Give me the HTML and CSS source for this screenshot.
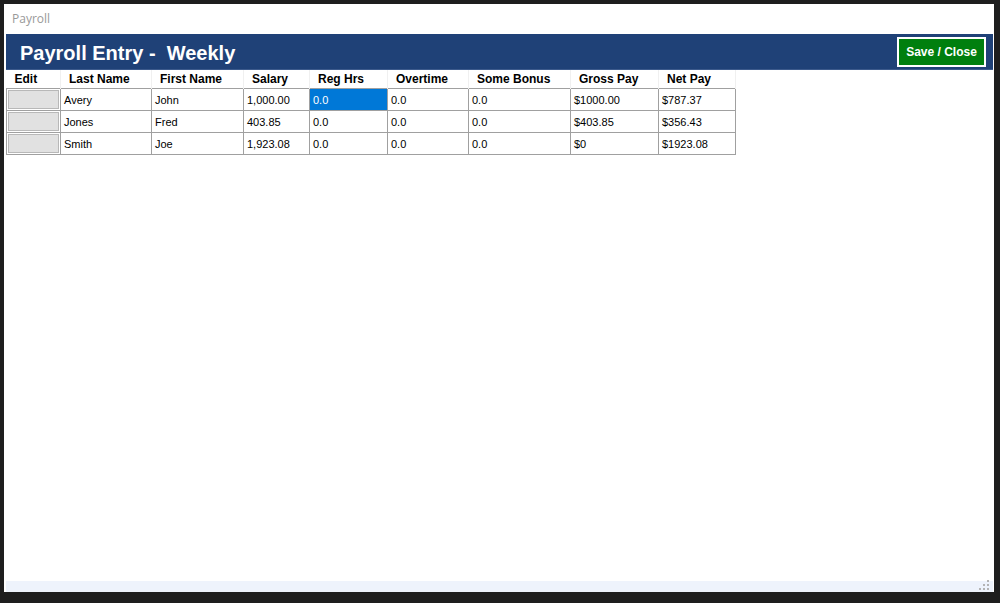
FILE: index.html
```html
<!DOCTYPE html>
<html>
<head>
<meta charset="utf-8">
<link rel="stylesheet" href="styles.css">
</head>
<body>
<div class="window">
  <div class="titlebar">Payroll</div>
  <div class="content">
    <div class="banner">
      <div class="banner-title">Payroll Entry -&nbsp; Weekly</div>
      <button class="save-btn">Save / Close</button>
    </div>
    <table class="grid">
      <colgroup>
        <col class="c-edit">
        <col class="c-last">
        <col class="c-first">
        <col class="c-sal">
        <col class="c-reg">
        <col class="c-ot">
        <col class="c-bon">
        <col class="c-gross">
        <col class="c-net">
      </colgroup>
      <thead>
        <tr>
          <th>Edit</th>
          <th>Last Name</th>
          <th>First Name</th>
          <th>Salary</th>
          <th>Reg Hrs</th>
          <th>Overtime</th>
          <th>Some Bonus</th>
          <th>Gross Pay</th>
          <th>Net Pay</th>
        </tr>
      </thead>
      <tbody>
        <tr>
          <td class="edit"><span class="edit-btn"></span></td>
          <td>Avery</td><td>John</td><td>1,000.00</td>
          <td class="selected">0.0</td><td>0.0</td><td>0.0</td>
          <td>$1000.00</td><td>$787.37</td>
        </tr>
        <tr>
          <td class="edit"><span class="edit-btn"></span></td>
          <td>Jones</td><td>Fred</td><td>403.85</td>
          <td>0.0</td><td>0.0</td><td>0.0</td>
          <td>$403.85</td><td>$356.43</td>
        </tr>
        <tr>
          <td class="edit"><span class="edit-btn"></span></td>
          <td>Smith</td><td>Joe</td><td>1,923.08</td>
          <td>0.0</td><td>0.0</td><td>0.0</td>
          <td>$0</td><td>$1923.08</td>
        </tr>
      </tbody>
    </table>
    <div class="spacer"></div>
    <div class="statusbar">
      <svg class="grip" width="12" height="12" viewBox="0 0 12 12">
        <rect x="8" y="0" width="2" height="2" fill="#b4b4b4"/>
        <rect x="4" y="4" width="2" height="2" fill="#b4b4b4"/>
        <rect x="8" y="4" width="2" height="2" fill="#b4b4b4"/>
        <rect x="0" y="8" width="2" height="2" fill="#b4b4b4"/>
        <rect x="4" y="8" width="2" height="2" fill="#b4b4b4"/>
        <rect x="8" y="8" width="2" height="2" fill="#b4b4b4"/>
      </svg>
    </div>
  </div>
</div>
</body>
</html>
```

FILE: styles.css
```css
html, body {
  margin: 0;
  padding: 0;
  background: #1e1e1e;
}
body {
  width: 1000px;
  height: 603px;
  overflow: hidden;
  padding: 4px;
  box-sizing: border-box;
}
.window {
  width: 990px;
  height: 588px;
  background: #ffffff;
  display: flex;
  flex-direction: column;
}
.titlebar {
  height: 30px;
  box-sizing: border-box;
  padding: 7px 0 0 8px;
  font-family: "Open Sans", "Noto Sans", sans-serif;
  font-size: 12px;
  color: #999999;
  line-height: 15px;
}
.content {
  flex: 1;
  display: flex;
  flex-direction: column;
  padding: 0 1px 0 2px;
}
.banner {
  height: 35px;
  background: #1f4177;
  border-bottom: 1px solid #3c5a8c;
  display: flex;
  align-items: center;
  justify-content: space-between;
  padding: 0 7px 0 14px;
}
.banner-title {
  font-family: "Liberation Sans", Arial, sans-serif;
  font-weight: bold;
  font-size: 20px;
  color: #ffffff;
  padding-top: 3px;
}
.save-btn {
  width: 89px;
  height: 30px;
  background: #007f0e;
  border: 2px solid #ffffff;
  color: #ffffff;
  font-family: "Liberation Sans", Arial, sans-serif;
  font-weight: bold;
  font-size: 12px;
  padding: 0;
  margin-top: 1px;
}
.grid {
  border-collapse: collapse;
  font-family: "Liberation Sans", Arial, sans-serif;
  font-size: 11px;
  color: #000000;
  table-layout: fixed;
  width: 729px;
}
.grid th {
  height: 18px;
  padding: 0 0 0 8px;
  text-align: left;
  font-weight: bold;
  font-size: 12px;
  border-right: 1px solid #f0f0f0;
  background: #ffffff;
  white-space: nowrap;
  overflow: hidden;
}
.grid td {
  height: 21px;
  padding: 0 0 0 3px;
  border: 1px solid #a0a0a0;
  white-space: nowrap;
  overflow: hidden;
}
.c-edit { width: 54px; }
.c-last { width: 91px; }
.c-first { width: 92px; }
.c-sal { width: 66px; }
.c-reg { width: 78px; }
.c-ot { width: 81px; }
.c-bon { width: 102px; }
.c-gross { width: 88px; }
.c-net { width: 77px; }
.grid td.edit {
  padding: 0;
}
.edit-btn {
  display: block;
  height: 19px;
  margin: 0 1px;
  background: #e1e1e1;
  border: 1px solid #b8b8b8;
  box-sizing: border-box;
}
.grid td.selected {
  background: #0078d7;
  color: #ffffff;
}
.spacer {
  flex: 1;
}
.statusbar {
  height: 11px;
  background: #eef3fc;
  display: flex;
  justify-content: flex-end;
  align-items: flex-end;
  padding-right: 2px;
}
.grip {
  display: block;
}
```
